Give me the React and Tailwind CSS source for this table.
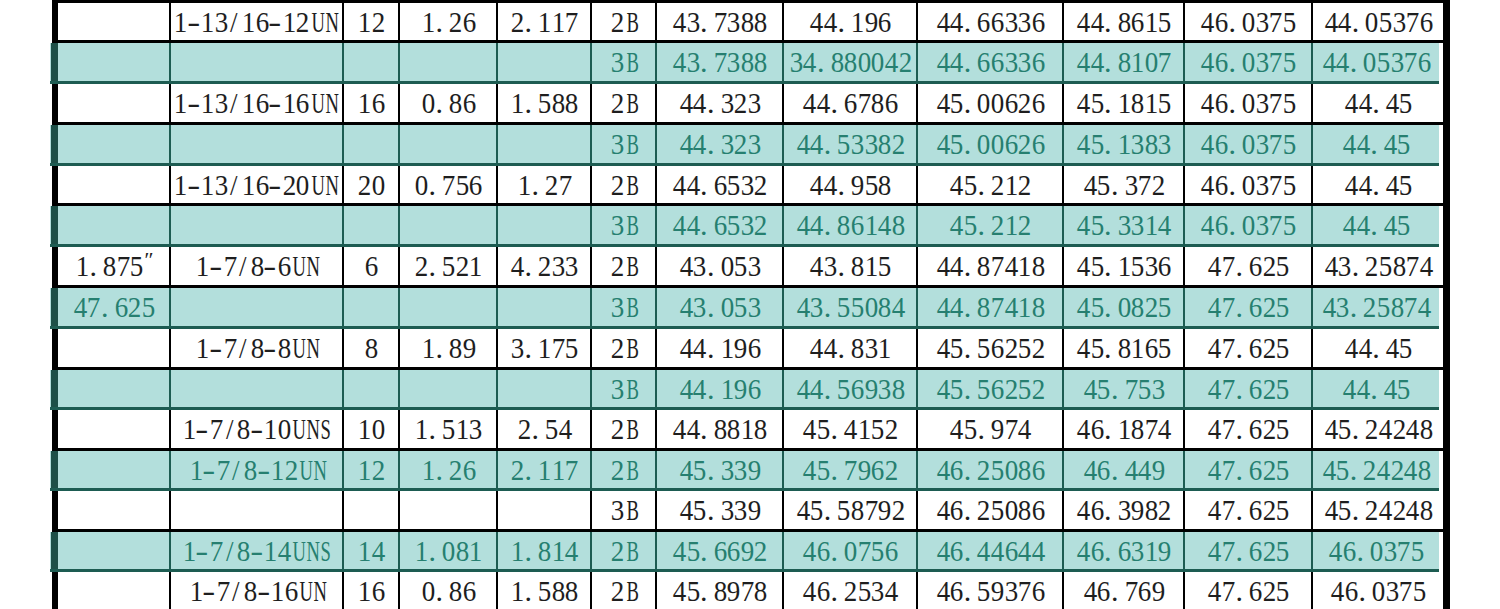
import React from "react";

const W_COLS = ["w-[111px]", "w-[173px]", "w-[56px]", "w-[98px]", "w-[94px]", "w-[65px]", "w-[127px]", "w-[134px]", "w-[146px]", "w-[121px]", "w-[128px]", "w-[132px]"];
const T_COLS = ["w-[111px]", "w-[173px]", "w-[56px]", "w-[98px]", "w-[94px]", "w-[65px]", "w-[127px]", "w-[134px]", "w-[146px]", "w-[121px]", "w-[128px]", "w-[128px]"];

const HEIGHTS = ["h-[43px]", "h-[41px]", "h-[41px]", "h-[41px]", "h-[40px]", "h-[41px]", "h-[41px]", "h-[41px]", "h-[41px]", "h-[40px]", "h-[41px]", "h-[40px]", "h-[41px]", "h-[40px]", "h-[41px]"];

const ROWS = [
  { t: false, d: ["", "1-13/16-12UN", "12", "1.26", "2.117", "2B", "43.7388", "44.196", "44.66336", "44.8615", "46.0375", "44.05376"] },
  { t: true, d: ["", "", "", "", "", "3B", "43.7388", "34.880042", "44.66336", "44.8107", "46.0375", "44.05376"] },
  { t: false, d: ["", "1-13/16-16UN", "16", "0.86", "1.588", "2B", "44.323", "44.6786", "45.00626", "45.1815", "46.0375", "44.45"] },
  { t: true, d: ["", "", "", "", "", "3B", "44.323", "44.53382", "45.00626", "45.1383", "46.0375", "44.45"] },
  { t: false, d: ["", "1-13/16-20UN", "20", "0.756", "1.27", "2B", "44.6532", "44.958", "45.212", "45.372", "46.0375", "44.45"] },
  { t: true, d: ["", "", "", "", "", "3B", "44.6532", "44.86148", "45.212", "45.3314", "46.0375", "44.45"] },
  { t: false, d: ["1.875″", "1-7/8-6UN", "6", "2.521", "4.233", "2B", "43.053", "43.815", "44.87418", "45.1536", "47.625", "43.25874"] },
  { t: true, d: ["47.625", "", "", "", "", "3B", "43.053", "43.55084", "44.87418", "45.0825", "47.625", "43.25874"] },
  { t: false, d: ["", "1-7/8-8UN", "8", "1.89", "3.175", "2B", "44.196", "44.831", "45.56252", "45.8165", "47.625", "44.45"] },
  { t: true, d: ["", "", "", "", "", "3B", "44.196", "44.56938", "45.56252", "45.753", "47.625", "44.45"] },
  { t: false, d: ["", "1-7/8-10UNS", "10", "1.513", "2.54", "2B", "44.8818", "45.4152", "45.974", "46.1874", "47.625", "45.24248"] },
  { t: true, d: ["", "1-7/8-12UN", "12", "1.26", "2.117", "2B", "45.339", "45.7962", "46.25086", "46.449", "47.625", "45.24248"] },
  { t: false, d: ["", "", "", "", "", "3B", "45.339", "45.58792", "46.25086", "46.3982", "47.625", "45.24248"] },
  { t: true, d: ["", "1-7/8-14UNS", "14", "1.081", "1.814", "2B", "45.6692", "46.0756", "46.44644", "46.6319", "47.625", "46.0375"] },
  { t: false, d: ["", "1-7/8-16UN", "16", "0.86", "1.588", "2B", "45.8978", "46.2534", "46.59376", "46.769", "47.625", "46.0375"] },
];

function Glyphs({ text }) {
  return (
    <span className="whitespace-nowrap">
      {Array.from(text).map((ch, i) => {
        if (ch === ".") {
          return (
            <span key={i} className="inline-block w-[13.6px] text-left pl-[1px]">
              {ch}
            </span>
          );
        }
        if (ch === "-") {
          return (
            <span key={i} className="inline-block w-[13.6px] text-center scale-x-[1.3]">
              {ch}
            </span>
          );
        }
        if (/[A-Z]/.test(ch)) {
          return (
            <span key={i} className="inline-block w-[13.6px] text-center scale-x-[0.62]">
              {ch}
            </span>
          );
        }
        if (ch === "″") {
          return (
            <span key={i} className="inline-block w-[9px] text-left text-[22px] align-top -mt-[2px] italic">
              {ch}
            </span>
          );
        }
        return (
          <span key={i} className="inline-block w-[13.6px] text-center scale-x-[0.9]">
            {ch}
          </span>
        );
      })}
    </span>
  );
}

function Cells({ data, teal }) {
  const cols = teal ? T_COLS : W_COLS;
  const line = teal ? "border-[#1d5c52]" : "border-black";
  return data.map((v, i) => {
    const leftAlign = i === 1 && v.length >= 12;
    return (
      <div
        key={i}
        className={`${cols[i]} ${i > 0 ? "border-l-2" : ""} ${line} shrink-0 flex items-center overflow-hidden ${
          leftAlign ? "justify-start pl-[2px]" : "justify-center"
        }`}
      >
        {v ? <Glyphs text={v} /> : null}
      </div>
    );
  });
}

function Row({ row, h, first }) {
  if (row.t) {
    return (
      <div className={`flex ${h}`}>
        <div className="flex w-[1389px] shrink-0 bg-[#b3dfdc] border-b-[3px] border-[#1d5c52] text-[#267f70]">
          <div className="w-[1px] shrink-0" />
          <div className="w-[7px] shrink-0 bg-[#1d5048]" />
          <Cells data={row.d} teal />
        </div>
        <div className="w-[4px] shrink-0 bg-white" />
        <div className="w-[7px] shrink-0 bg-black" />
      </div>
    );
  }
  return (
    <div className={`flex ${h}`}>
      <div className="w-[2px] shrink-0 bg-white" />
      <div
        className={`flex w-[1398px] shrink-0 border-b-[3px] border-black text-[#1e1e1e] ${
          first ? "border-t-[3px]" : ""
        }`}
      >
        <div className="w-[6px] shrink-0 bg-black" />
        <Cells data={row.d} teal={false} />
        <div className="w-[7px] shrink-0 bg-black" />
      </div>
    </div>
  );
}

export default function App() {
  return (
    <div className="w-[1500px] h-[609px] overflow-hidden bg-white pl-[50px] text-[30px] leading-none font-['Liberation_Serif','Noto_Sans_CJK_SC',serif]">
      <div className="flex flex-col">
        {ROWS.map((r, i) => (
          <Row key={i} row={r} h={HEIGHTS[i]} first={i === 0} />
        ))}
      </div>
    </div>
  );
}
